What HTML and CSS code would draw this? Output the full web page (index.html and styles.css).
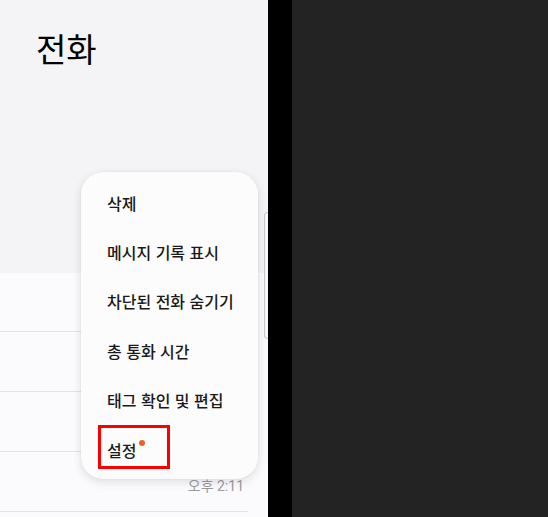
FILE: index.html
```html
<!DOCTYPE html>
<html lang="ko">
<head>
<meta charset="utf-8">
<link rel="stylesheet" href="styles.css">
</head>
<body>
<div class="screen">
  <div class="phone">
    <div class="header">
      <h1 class="title">전화</h1>
    </div>
    <div class="list">
      <div class="row"></div>
      <div class="row"></div>
      <div class="row"></div>
      <div class="row"><span class="time">오후 2:11</span></div>
    </div>
    <div class="scroller"></div>
    <div class="menu">
      <div class="item">삭제</div>
      <div class="item">메시지 기록 표시</div>
      <div class="item">차단된 전화 숨기기</div>
      <div class="item">총 통화 시간</div>
      <div class="item">태그 확인 및 편집</div>
      <div class="item item-last"><span class="label">설정<span class="dot"></span></span></div>
      <div class="highlight"></div>
    </div>
  </div>
  <div class="gap"></div>
  <div class="dark"></div>
</div>
</body>
</html>
```
FILE: styles.css
```css
html, body {
  margin: 0;
  padding: 0;
  height: 100%;
}
body {
  font-family: "Noto Sans CJK KR", "Noto Sans", sans-serif;
  background: #232323;
}
.screen {
  display: flex;
  height: 517px;
  width: 548px;
}
.phone {
  position: relative;
  width: 268px;
  height: 517px;
  background: #fbfbfd;
  overflow: hidden;
}
.gap {
  width: 24px;
  background: #000;
}
.dark {
  flex: 1;
  background: #232323;
}
.header {
  height: 273px;
  background: #f4f4f6;
  padding: 21px 0 0 36px;
  box-sizing: border-box;
}
.title {
  margin: 0;
  font-size: 33px;
  font-weight: 400;
  color: #000;
  line-height: 54px;
}
.list {
  display: flex;
  flex-direction: column;
}
.row {
  height: 59px;
  margin-right: 20px;
  border-bottom: 1px solid #e2e2e4;
  display: flex;
  justify-content: flex-end;
  align-items: flex-end;
}
.row:first-child {
  height: 58px;
}
.time {
  font-family: Roboto, "Noto Sans CJK KR", sans-serif;
  font-size: 14px;
  color: #9a9a9c;
  margin-right: 4px;
  margin-bottom: 16px;
  line-height: 18px;
}
.scroller {
  position: absolute;
  left: 264px;
  top: 212px;
  width: 6px;
  height: 125px;
  border: 1px solid #c9c9cb;
  border-right: none;
  border-radius: 4px 0 0 4px;
  background: #f9f9fb;
}
.menu {
  position: absolute;
  left: 81px;
  top: 172px;
  width: 177px;
  height: 307px;
  background: #fcfcfd;
  border-radius: 22px;
  box-shadow: 0 3px 10px rgba(0,0,0,0.12), 0 0 2px rgba(0,0,0,0.06);
  padding-top: 6px;
  box-sizing: border-box;
}
.item {
  height: 49.4px;
  display: flex;
  align-items: center;
  padding-left: 26px;
  font-size: 16px;
  font-weight: 500;
  color: #1a1a1a;
  white-space: nowrap;
}
.label {
  position: relative;
}
.dot {
  position: absolute;
  right: -9px;
  top: 2px;
  width: 6px;
  height: 6px;
  border-radius: 50%;
  background: #e8622a;
}
.highlight {
  position: absolute;
  left: 17px;
  top: 253px;
  width: 66px;
  height: 38px;
  border: 3px solid #ff0000;
}
```
